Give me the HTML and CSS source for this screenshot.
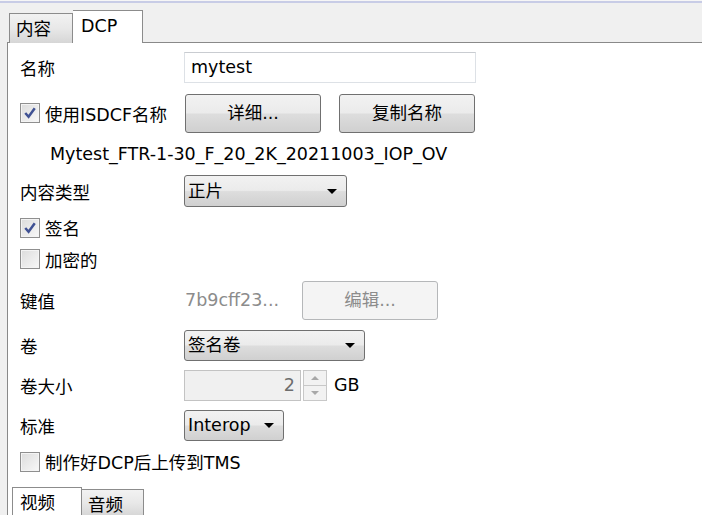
FILE: index.html
```html
<!DOCTYPE html>
<html lang="zh-CN">
<head>
    <meta charset="UTF-8">
    <title>DCP</title>
    <link rel="stylesheet" href="styles.css">
</head>
<body>
    <div class="topline"></div>
    <div class="tabs">
        <div class="tab">内容</div>
        <div class="tab active">DCP</div>
    </div>
    <div class="panel">
        <div class="form">
            <div class="label">名称</div>
            <div class="cell"><div class="input">mytest</div></div>

            <label class="check"><span class="box on"><svg viewBox="0 0 19 19"><path d="M4.5 9.5 L8 13.5 L14.5 4.5" /></svg></span>使用ISDCF名称</label>
            <div class="cell buttons">
                <div class="btn">详细...</div>
                <div class="btn">复制名称</div>
            </div>

            <div class="dcp-name">Mytest_FTR-1-30_F_20_2K_20211003_IOP_OV</div>

            <div class="label">内容类型</div>
            <div class="cell"><div class="combo w-type">正片<span class="arrow"></span></div></div>

            <label class="check wide"><span class="box on"><svg viewBox="0 0 19 19"><path d="M4.5 9.5 L8 13.5 L14.5 4.5" /></svg></span>签名</label>

            <label class="check wide"><span class="box"></span>加密的</label>

            <div class="label">键值</div>
            <div class="cell key">
                <span class="muted">7b9cff23...</span>
                <div class="btn disabled">编辑...</div>
            </div>

            <div class="label">卷</div>
            <div class="cell"><div class="combo w-reel">签名卷<span class="arrow"></span></div></div>

            <div class="label">卷大小</div>
            <div class="cell spin-row">
                <div class="spin">
                    <div class="spin-text">2</div>
                    <div class="spin-btns">
                        <div class="spin-btn"><span class="tri up"></span></div>
                        <div class="spin-btn"><span class="tri down"></span></div>
                    </div>
                </div>
                <span>GB</span>
            </div>

            <div class="label">标准</div>
            <div class="cell"><div class="combo w-std">Interop<span class="arrow"></span></div></div>

            <label class="check wide"><span class="box"></span>制作好DCP后上传到TMS</label>
        </div>

        <div class="subtabs">
            <div class="tab active">视频</div>
            <div class="tab">音频</div>
        </div>
    </div>
</body>
</html>
```

FILE: styles.css
```css
html, body {
    margin: 0;
    height: 100%;
    overflow: hidden;
}
body {
    background: #f0f0f0;
    font-family: "DejaVu Sans", "Noto Sans CJK SC", sans-serif;
    font-size: 17.5px;
    color: #000;
}
.topline {
    height: 1px;
    border-bottom: 2px solid #c8cce6;
    background: #f6f6f6;
}
.tabs {
    display: flex;
    align-items: flex-end;
    padding-left: 9px;
    margin-top: 7px;
    height: 33px;
    position: relative;
    z-index: 1;
    margin-bottom: -1px;
}
.tab {
    box-sizing: border-box;
    height: 30px;
    padding: 0 6px;
    line-height: 30px;
    border: 1px solid #8c8c8c;
    border-bottom: none;
    background: linear-gradient(#f2f2f2, #e8e8e8 50%, #d6d6d6);
}
.tabs .tab {
    width: 64px;
}
.tabs .tab.active {
    width: 70px;
    height: 33px;
    padding-left: 8px;
    line-height: 30px;
    background: #fff;
    border-left: none;
}
.panel {
    box-sizing: border-box;
    background: #fff;
    border-top: 1px solid #898989;
    border-left: 1px solid #898989;
    margin-left: 7px;
    padding-left: 12px;
    height: 473px;
}
.form {
    display: grid;
    grid-template-columns: 164px 1fr;
    grid-template-rows: 49px 42px 40px 34px 39px 24px 58px 32px 48px 32px 41px;
    align-items: center;
}
.cell {
    display: flex;
    align-items: center;
}
.input {
    box-sizing: border-box;
    width: 292px;
    height: 31px;
    border: 1px solid #dde1e6;
    border-top-color: #c9ccd1;
    padding-left: 6px;
    line-height: 29px;
    background: #fff;
}
.check {
    display: flex;
    align-items: center;
}
.check.wide {
    grid-column: 1 / -1;
}
.box {
    box-sizing: border-box;
    width: 20px;
    height: 20px;
    margin-right: 5px;
    border: 1px solid #8f8f8f;
    background: linear-gradient(135deg, #dcdcdc, #f8f8f8);
    box-shadow: inset 0 0 0 1px #f4f4f4;
}
.box svg {
    display: block;
    width: 18px;
    height: 18px;
}
.box path {
    fill: none;
    stroke: #3f5193;
    stroke-width: 2.6;
}
.buttons {
    gap: 18px;
    padding-left: 1px;
}
.btn {
    box-sizing: border-box;
    width: 136px;
    height: 39px;
    border: 1px solid #707070;
    border-radius: 3px;
    background: linear-gradient(#f2f2f2, #ebebeb 48%, #dddddd 52%, #d0d0d0);
    text-align: center;
    line-height: 37px;
}
.btn.disabled {
    border-color: #b5b7b9;
    background: #f4f4f4;
    color: #8c8c8c;
}
.dcp-name {
    grid-column: 1 / -1;
    padding-left: 30px;
}
.combo {
    box-sizing: border-box;
    position: relative;
    height: 31px;
    padding-left: 3px;
    line-height: 29px;
    border: 1px solid #707070;
    border-radius: 3px;
    background: linear-gradient(#f2f2f2, #ebebeb 48%, #dddddd 52%, #d0d0d0);
}
.w-type { width: 163px; height: 32px; line-height: 30px; }
.w-reel { width: 181px; }
.w-std { width: 100px; }
.arrow {
    position: absolute;
    right: 9px;
    top: 50%;
    margin-top: -2px;
    border-left: 5px solid transparent;
    border-right: 5px solid transparent;
    border-top: 5px solid #000;
}
.key {
    gap: 0;
}
.muted {
    width: 117px;
    padding-left: 1px;
    color: #8c8c8c;
}
.key .btn {
    width: 136px;
}
.spin-row {
    gap: 7px;
}
.spin {
    display: flex;
    height: 31px;
}
.spin-text {
    box-sizing: border-box;
    width: 117px;
    height: 31px;
    border: 1px solid #c3c3c3;
    background: #f0f0f0;
    color: #6d6d6d;
    text-align: right;
    padding-right: 5px;
    line-height: 29px;
}
.spin-btns {
    display: flex;
    flex-direction: column;
    margin-left: 2px;
    width: 24px;
}
.spin-btn {
    flex: 1;
    box-sizing: border-box;
    border: 1px solid #c8c8c8;
    background: #f2f2f2;
    display: flex;
    align-items: center;
    justify-content: center;
}
.spin-btn + .spin-btn {
    border-top: none;
}
.tri {
    border-left: 4px solid transparent;
    border-right: 4px solid transparent;
}
.tri.up { border-bottom: 4px solid #a8a8a8; }
.tri.down { border-top: 4px solid #a8a8a8; }
.subtabs {
    display: flex;
    margin-top: 5px;
    margin-left: -8px;
    align-items: flex-start;
}
.subtabs .tab {
    height: 27px;
    width: 62px;
    margin-top: 2px;
    border-left: none;
}
.subtabs .tab.active {
    height: 29px;
    width: 70px;
    margin-top: 0;
    border-left: 1px solid #8c8c8c;
    background: #fff;
    line-height: 30px;
    padding-left: 7px;
}
```
